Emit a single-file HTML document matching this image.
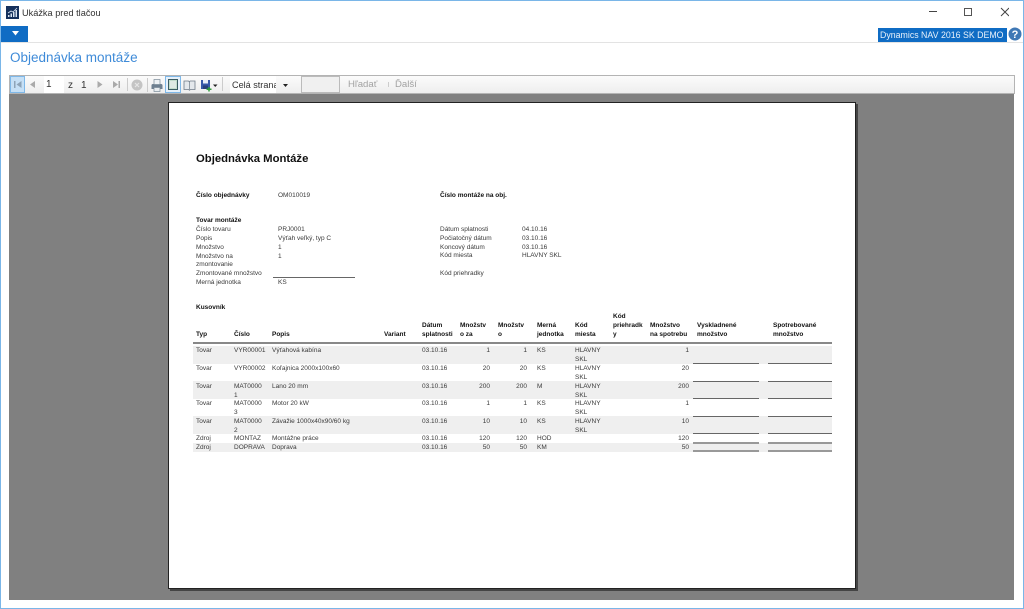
<!DOCTYPE html>
<html lang="sk">
<head>
<meta charset="utf-8">
<title>Ukážka pred tlačou</title>
<style>
html,body{margin:0;padding:0;background:#fff}
#w{position:relative;width:1024px;height:609px;overflow:hidden;background:#fff;font-family:"Liberation Sans",sans-serif;box-sizing:border-box}
#w div,#w span,#w svg{position:absolute}
.t{font-size:6.5px;line-height:10px;height:10px;white-space:nowrap;color:#3a3a3a;margin-top:1px;filter:blur(.25px)}
.b{font-weight:bold;color:#111}
.r{text-align:right;width:40px}
.g{background:#efefef;left:25px;width:639px}
.l{height:1px;background:#666;width:66px}
.q{background:#999;height:2px}
</style>
</head>
<body>
<div id="w">
<div style="left:0;top:0;width:1024px;height:1px;background:#7ab6e8"></div>
<div style="left:0;top:0;width:1px;height:609px;background:#7ab6e8"></div>
<div style="left:1023px;top:0;width:1px;height:609px;background:#7ab6e8"></div>
<div style="left:0;top:608px;width:1024px;height:1px;background:#7ab6e8"></div>

<svg style="left:6px;top:6px" width="13" height="13" viewBox="0 0 13 13"><rect width="13" height="13" fill="#14305c"/><path d="M2 11V9h1.500v2zM4.500 11V7.500H6V11zM7 11V6h1.500v5zM9.500 11V4H11v7z" fill="#d8e4f2"/><path d="M2 7l3-2 2 1 4-4" stroke="#d8e4f2" fill="none" stroke-width=".8"/></svg>
<div style="left:22px;top:6px;font-size:9.200px;line-height:14px;color:#333;white-space:nowrap">Ukážka pred tlačou</div>

<svg style="left:929px;top:7px" width="80" height="10" viewBox="0 0 80 10"><path d="M0 4.500H8" stroke="#444"/><rect x="35.500" y="1.500" width="7" height="7" fill="none" stroke="#555"/><path d="M72 1l8 8M80 1l-8 8" stroke="#444" fill="none"/></svg>

<div style="left:1px;top:26px;width:27px;height:16px;background:#0f6cc4"></div>
<svg style="left:12px;top:31px" width="7" height="5" viewBox="0 0 7 5"><path d="M0 0H7L3.500 4.500z" fill="#fff"/></svg>
<div style="left:1px;top:42px;width:1022px;height:1px;background:#e3e3e3"></div>

<div style="left:878px;top:28px;width:129px;height:14px;background:#0f6cc4;color:#e8f1fa;font-size:8.800px;line-height:14px;white-space:nowrap;text-indent:2px">Dynamics NAV 2016 SK DEMO</div>
<svg style="left:1008px;top:27px" width="14" height="14" viewBox="0 0 14 14"><circle cx="7" cy="7" r="6.500" fill="#3f78b5"/><text x="7" y="11" text-anchor="middle" font-family="Liberation Sans" font-weight="bold" font-size="11" fill="#fff">?</text></svg>

<div style="left:10px;top:49px;font-size:13.500px;line-height:18px;color:#3f8bd8;white-space:nowrap">Objednávka montáže</div>

<div style="left:9px;top:75px;width:1006px;height:19px;background:linear-gradient(#fbfbfb,#eeeeee);box-sizing:border-box;border:1px solid #b4b4b4"></div>
<div style="left:10px;top:76px;width:15px;height:17px;background:#c6e0f6;box-sizing:border-box;border:1px solid #7fb8e8"></div>
<div style="left:44px;top:76px;width:20px;height:17px;background:#fff"></div>
<div style="left:46px;top:79px;font-size:10px;line-height:12px;color:#333">1</div>
<div style="left:68px;top:80px;font-size:10px;line-height:12px;color:#333">z</div>
<div style="left:81px;top:80px;font-size:10px;line-height:12px;color:#333">1</div>
<svg style="left:10px;top:76px" width="125" height="17" viewBox="0 0 125 17">
<path d="M4 5h1.500v7H4zM11.500 5v7L6.500 8.500z" fill="#8ea4b8"/>
<path d="M25 5v7l-5-3.500z" fill="#aaa"/>
<path d="M87.500 5v7l5-3.500z" fill="#aaa"/>
<path d="M103 5v7l5-3.500zM108.500 5h1.500v7h-1.500z" fill="#aaa"/>
<path d="M117.500 2v13" stroke="#ccc"/>
</svg>
<svg style="left:130px;top:78px" width="90" height="15" viewBox="0 0 90 15">
<circle cx="7" cy="7" r="5.500" fill="#c4c4c4"/><path d="M5 5l4 4M9 5l-4 4" stroke="#e6e6e6" stroke-width="1.200"/>
<path d="M17.500 0v14" stroke="#ccc"/>
<path d="M23 6h8a1.500 1.500 0 0 1 1.500 1.500V11h-11V7.500A1.500 1.500 0 0 1 23 6z" fill="#6d7f90"/><rect x="24" y="1.500" width="6" height="5" fill="#eef2f5" stroke="#7a8a98" stroke-width=".7"/><rect x="24" y="9.500" width="6" height="4" fill="#e8ecef" stroke="#7a8a98" stroke-width=".7"/>
</svg>
<div style="left:165px;top:76px;width:16px;height:17px;box-sizing:border-box;border:1px solid #7fb8e8;background:#e6f1fb"></div>
<svg style="left:168px;top:79px" width="10" height="11" viewBox="0 0 10 11"><rect x=".5" y=".5" width="9" height="10" fill="#c3dccb" stroke="#3c5c62"/><rect x="2" y="2" width="6" height="7" fill="#dfe9e3"/></svg>
<svg style="left:183px;top:79px" width="40" height="13" viewBox="0 0 40 13">
<path d="M1 2h4.500l.8.8.8-.8H12v8.500H7.500l-1 .8-1-.8H1z" fill="#e4e8ec" stroke="#6f7b88" stroke-width=".8"/><path d="M6.500 3v7.500" stroke="#6f7b88" stroke-width=".7"/>
<path d="M18 1h9v9h-9z" fill="#3759a8"/><rect x="20" y="1" width="5" height="3.500" fill="#e8eef8"/><rect x="20" y="6.500" width="5" height="3.500" fill="#27407c"/><path d="M26 8v4.500M23.500 10.200h5" stroke="#2f9e3a" stroke-width="1.500"/>
<path d="M30 5.500h4.500L32.250 8z" fill="#222"/>
</svg>
<div style="left:222px;top:77px;width:1px;height:14px;background:#ccc"></div>
<div style="left:230px;top:76px;width:46px;height:17px;background:#fff"></div>
<div style="left:232px;top:79px;width:44px;overflow:hidden;font-size:9.100px;line-height:13px;color:#333;white-space:nowrap">Celá strana</div>
<svg style="left:283px;top:84px" width="5" height="3" viewBox="0 0 5 3"><path d="M0 0h5L2.500 3z" fill="#222"/></svg>
<div style="left:301px;top:76px;width:39px;height:17px;box-sizing:border-box;border:1px solid #bbb;background:#f0f0f0"></div>
<div style="left:348px;top:78px;font-size:9.600px;line-height:14px;color:#a2a2a2;white-space:nowrap">Hľadať</div>
<div style="left:388px;top:82px;width:1px;height:5px;background:#ccc"></div>
<div style="left:395px;top:78px;font-size:9.600px;line-height:14px;color:#a2a2a2;white-space:nowrap">Ďalší</div>

<div style="left:9px;top:94px;width:1005px;height:506px;background:#808080"></div>

<div style="left:168px;top:102px;width:688px;height:487px;background:#fff;box-sizing:border-box;border:1px solid #222;box-shadow:2px 2px 0 #444"></div>

<div id="p" style="left:168px;top:0;width:700px;height:609px">
<div style="left:28px;top:152px;font-size:11.300px;line-height:14px;font-weight:bold;color:#111;white-space:nowrap">Objednávka Montáže</div>
<span class="t b" style="left:28px;top:190px">Číslo objednávky</span>
<span class="t" style="left:110px;top:190px">OM010019</span>
<span class="t b" style="left:272px;top:190px">Číslo montáže na obj.</span>
<span class="t b" style="left:28px;top:215px">Tovar montáže</span>
<span class="t" style="left:28px;top:224px">Číslo tovaru</span>
<span class="t" style="left:110px;top:224px">PRJ0001</span>
<span class="t" style="left:28px;top:233px">Popis</span>
<span class="t" style="left:110px;top:233px">Výťah veľký, typ C</span>
<span class="t" style="left:28px;top:242px">Množstvo</span>
<span class="t" style="left:110px;top:242px">1</span>
<span class="t" style="left:28px;top:251px">Množstvo na</span>
<span class="t" style="left:110px;top:251px">1</span>
<span class="t" style="left:28px;top:259px">zmontovanie</span>
<span class="t" style="left:28px;top:268px">Zmontované množstvo</span>
<div style="left:105px;top:277px;width:82px;height:1px;background:#666"></div>
<span class="t" style="left:28px;top:277px">Merná jednotka</span>
<span class="t" style="left:110px;top:277px">KS</span>

<span class="t" style="left:272px;top:224px">Dátum splatnosti</span>
<span class="t" style="left:354px;top:224px">04.10.16</span>
<span class="t" style="left:272px;top:233px">Počiatočný dátum</span>
<span class="t" style="left:354px;top:233px">03.10.16</span>
<span class="t" style="left:272px;top:242px">Koncový dátum</span>
<span class="t" style="left:354px;top:242px">03.10.16</span>
<span class="t" style="left:272px;top:250px">Kód miesta</span>
<span class="t" style="left:354px;top:250px">HLAVNY SKL</span>
<span class="t" style="left:272px;top:268px">Kód priehradky</span>

<span class="t b" style="left:28px;top:302px">Kusovník</span>

<span class="t b" style="left:28px;top:329px">Typ</span>
<span class="t b" style="left:66px;top:329px">Číslo</span>
<span class="t b" style="left:104px;top:329px">Popis</span>
<span class="t b" style="left:216px;top:329px">Variant</span>
<span class="t b" style="left:254px;top:320px">Dátum</span>
<span class="t b" style="left:254px;top:329px">splatnosti</span>
<span class="t b" style="left:292px;top:320px">Množstv</span>
<span class="t b" style="left:292px;top:329px">o za</span>
<span class="t b" style="left:330px;top:320px">Množstv</span>
<span class="t b" style="left:330px;top:329px">o</span>
<span class="t b" style="left:369px;top:320px">Merná</span>
<span class="t b" style="left:369px;top:329px">jednotka</span>
<span class="t b" style="left:407px;top:320px">Kód</span>
<span class="t b" style="left:407px;top:329px">miesta</span>
<span class="t b" style="left:445px;top:311px">Kód</span>
<span class="t b" style="left:445px;top:320px">priehradk</span>
<span class="t b" style="left:445px;top:329px">y</span>
<span class="t b" style="left:482px;top:320px">Množstvo</span>
<span class="t b" style="left:482px;top:329px">na spotrebu</span>
<span class="t b" style="left:529px;top:320px">Vyskladnené</span>
<span class="t b" style="left:529px;top:329px">množstvo</span>
<span class="t b" style="left:605px;top:320px">Spotrebované</span>
<span class="t b" style="left:605px;top:329px">množstvo</span>

<div style="left:25px;top:342px;width:639px;height:2px;background:#888"></div>

<div class="g" style="top:346px;height:18px"></div>
<div class="g" style="top:381px;height:18px"></div>
<div class="g" style="top:416px;height:18px"></div>
<div class="g" style="top:443px;height:9px"></div>

<span class="t" style="left:28px;top:345px">Tovar</span>
<span class="t" style="left:66px;top:345px">VYR00001</span>
<span class="t" style="left:104px;top:345px">Výťahová kabína</span>
<span class="t" style="left:254px;top:345px">03.10.16</span>
<span class="t r" style="left:282px;top:345px">1</span>
<span class="t r" style="left:319px;top:345px">1</span>
<span class="t" style="left:369px;top:345px">KS</span>
<span class="t" style="left:407px;top:345px">HLAVNY</span>
<span class="t" style="left:407px;top:354px">SKL</span>
<span class="t r" style="left:481px;top:345px">1</span>

<span class="t" style="left:28px;top:363px">Tovar</span>
<span class="t" style="left:66px;top:363px">VYR00002</span>
<span class="t" style="left:104px;top:363px">Koľajnica 2000x100x60</span>
<span class="t" style="left:254px;top:363px">03.10.16</span>
<span class="t r" style="left:282px;top:363px">20</span>
<span class="t r" style="left:319px;top:363px">20</span>
<span class="t" style="left:369px;top:363px">KS</span>
<span class="t" style="left:407px;top:363px">HLAVNY</span>
<span class="t" style="left:407px;top:372px">SKL</span>
<span class="t r" style="left:481px;top:363px">20</span>

<span class="t" style="left:28px;top:381px">Tovar</span>
<span class="t" style="left:66px;top:381px">MAT0000</span>
<span class="t" style="left:66px;top:390px">1</span>
<span class="t" style="left:104px;top:381px">Lano 20 mm</span>
<span class="t" style="left:254px;top:381px">03.10.16</span>
<span class="t r" style="left:282px;top:381px">200</span>
<span class="t r" style="left:319px;top:381px">200</span>
<span class="t" style="left:369px;top:381px">M</span>
<span class="t" style="left:407px;top:381px">HLAVNY</span>
<span class="t" style="left:407px;top:390px">SKL</span>
<span class="t r" style="left:481px;top:381px">200</span>

<span class="t" style="left:28px;top:398px">Tovar</span>
<span class="t" style="left:66px;top:398px">MAT0000</span>
<span class="t" style="left:66px;top:407px">3</span>
<span class="t" style="left:104px;top:398px">Motor 20 kW</span>
<span class="t" style="left:254px;top:398px">03.10.16</span>
<span class="t r" style="left:282px;top:398px">1</span>
<span class="t r" style="left:319px;top:398px">1</span>
<span class="t" style="left:369px;top:398px">KS</span>
<span class="t" style="left:407px;top:398px">HLAVNY</span>
<span class="t" style="left:407px;top:407px">SKL</span>
<span class="t r" style="left:481px;top:398px">1</span>

<span class="t" style="left:28px;top:416px">Tovar</span>
<span class="t" style="left:66px;top:416px">MAT0000</span>
<span class="t" style="left:66px;top:425px">2</span>
<span class="t" style="left:104px;top:416px">Závažie 1000x40x90/60 kg</span>
<span class="t" style="left:254px;top:416px">03.10.16</span>
<span class="t r" style="left:282px;top:416px">10</span>
<span class="t r" style="left:319px;top:416px">10</span>
<span class="t" style="left:369px;top:416px">KS</span>
<span class="t" style="left:407px;top:416px">HLAVNY</span>
<span class="t" style="left:407px;top:425px">SKL</span>
<span class="t r" style="left:481px;top:416px">10</span>

<span class="t" style="left:28px;top:433px">Zdroj</span>
<span class="t" style="left:66px;top:433px">MONTAZ</span>
<span class="t" style="left:104px;top:433px">Montážne práce</span>
<span class="t" style="left:254px;top:433px">03.10.16</span>
<span class="t r" style="left:282px;top:433px">120</span>
<span class="t r" style="left:319px;top:433px">120</span>
<span class="t" style="left:369px;top:433px">HOD</span>
<span class="t r" style="left:481px;top:433px">120</span>

<span class="t" style="left:28px;top:442px">Zdroj</span>
<span class="t" style="left:66px;top:442px">DOPRAVA</span>
<span class="t" style="left:104px;top:442px">Doprava</span>
<span class="t" style="left:254px;top:442px">03.10.16</span>
<span class="t r" style="left:282px;top:442px">50</span>
<span class="t r" style="left:319px;top:442px">50</span>
<span class="t" style="left:369px;top:442px">KM</span>
<span class="t r" style="left:481px;top:442px">50</span>

<div class="l" style="left:525px;top:363px"></div><div class="l" style="left:600px;top:363px;width:64px"></div>
<div class="l" style="left:525px;top:381px"></div><div class="l" style="left:600px;top:381px;width:64px"></div>
<div class="l" style="left:525px;top:398px"></div><div class="l" style="left:600px;top:398px;width:64px"></div>
<div class="l" style="left:525px;top:416px"></div><div class="l" style="left:600px;top:416px;width:64px"></div>
<div class="l" style="left:525px;top:433px"></div><div class="l" style="left:600px;top:433px;width:64px"></div>
<div class="q" style="left:525px;top:442px;width:66px"></div><div class="q" style="left:600px;top:442px;width:64px"></div>
<div class="q" style="left:525px;top:450px;width:66px"></div><div class="q" style="left:600px;top:450px;width:64px"></div>
</div>
</div>
</body>
</html>
